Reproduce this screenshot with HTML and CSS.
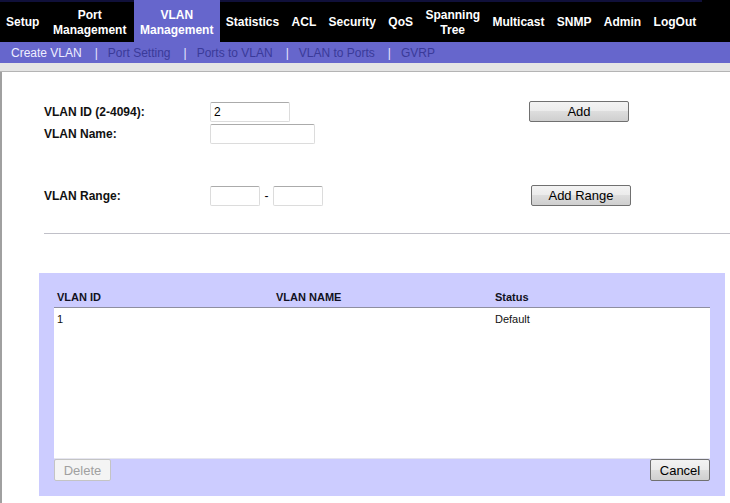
FILE: index.html
```html
<!DOCTYPE html>
<html>
<head>
<meta charset="utf-8">
<link rel="stylesheet" href="styles.css">
</head>
<body>
<nav class="topnav">
  <a class="tab">Setup</a>
  <a class="tab">Port<br>Management</a>
  <a class="tab active">VLAN<br>Management</a>
  <a class="tab">Statistics</a>
  <a class="tab">ACL</a>
  <a class="tab">Security</a>
  <a class="tab">QoS</a>
  <a class="tab">Spanning<br>Tree</a>
  <a class="tab">Multicast</a>
  <a class="tab">SNMP</a>
  <a class="tab">Admin</a>
  <a class="tab">LogOut</a>
</nav>
<div class="subnav">
  <a class="sub current">Create VLAN</a><span class="sep">|</span>
  <a class="sub">Port Setting</a><span class="sep">|</span>
  <a class="sub">Ports to VLAN</a><span class="sep">|</span>
  <a class="sub">VLAN to Ports</a><span class="sep">|</span>
  <a class="sub">GVRP</a>
</div>
<div class="strip"></div>
<main class="main">
  <form class="vform">
    <div class="row r1">
      <label class="lbl">VLAN ID (2-4094):</label>
      <div class="field"><input class="inp w80" type="text" value="2"></div>
      <button type="button" class="btn btn-add">Add</button>
    </div>
    <div class="row r2">
      <label class="lbl">VLAN Name:</label>
      <div class="field"><input class="inp w105" type="text"></div>
    </div>
    <div class="row r3">
      <label class="lbl">VLAN Range:</label>
      <div class="field"><input class="inp w50" type="text"><span class="dash">-</span><input class="inp w50" type="text"></div>
      <button type="button" class="btn btn-range">Add Range</button>
    </div>
  </form>
  <hr class="rule">
  <section class="panel">
    <div class="thead">
      <span>VLAN ID</span><span>VLAN NAME</span><span>Status</span>
    </div>
    <div class="tbody">
      <div class="trow"><span>1</span><span></span><span>Default</span></div>
    </div>
    <div class="actions">
      <button type="button" class="btn btn-del" disabled>Delete</button>
      <button type="button" class="btn btn-cancel">Cancel</button>
    </div>
  </section>
</main>
</body>
</html>
```
FILE: styles.css
```css
html, body {
  margin: 0;
  padding: 0;
  background: #ffffff;
  font-family: "Liberation Sans", Arial, sans-serif;
  width: 730px;
  overflow: hidden;
}
.topnav {
  display: flex;
  background: #000000;
  height: 42px;
}
.tab {
  display: flex;
  align-items: center;
  justify-content: center;
  text-align: center;
  padding: 0 6.2px;
  color: #ffffff;
  font-weight: bold;
  font-size: 12px;
  line-height: 15px;
  border-top: 2px solid #10103a;
  box-sizing: border-box;
  height: 42px;
  padding-top: 1px;
}
.tab:first-child { padding-left: 6px; }
.tab:nth-child(2) { padding-left: 7.5px; padding-right: 7.5px; }
.tab.active {
  background: #6666cc;
  border-top-color: #6666cc;
}
.subnav {
  display: flex;
  align-items: center;
  background: #6666cc;
  height: 21px;
  padding-left: 11px;
  font-size: 12px;
}
.sub { color: #3a3a99; }
.sub.current { color: #eeeeff; }
.sep {
  color: #e6e6ff;
  margin: 0 10px 0 13px;
}
.strip {
  height: 8px;
  background: #e4e4e4;
  border-bottom: 1px solid #b4b4b4;
}
.main {
  border-left: 2px solid #a0a0a0;
  padding: 29px 0 20px 42px;
}
.vform { margin: 0; }
.row {
  display: grid;
  grid-template-columns: 166px 319px auto;
  align-items: center;
}
.r1 { height: 21px; }
.r2 { height: 20px; margin-top: 2px; }
.r3 { height: 21px; margin-top: 41px; }
.lbl {
  font-weight: bold;
  font-size: 12px;
  color: #111111;
}
.field {
  display: flex;
  align-items: center;
}
.inp {
  box-sizing: border-box;
  height: 20px;
  border: 1px solid #dcdcdc;
  border-top-color: #ababab;
  border-radius: 2px;
  font-family: "Liberation Sans", Arial, sans-serif;
  font-size: 12px;
  padding: 0 3px;
  margin: 0;
  background: #ffffff;
  color: #000;
}
.w80 { width: 80px; }
.w105 { width: 105px; }
.w50 { width: 50px; }
.dash {
  font-size: 12px;
  width: 13px;
  text-align: center;
}
.btn {
  box-sizing: border-box;
  height: 21px;
  font-family: "Liberation Sans", Arial, sans-serif;
  font-size: 13px;
  color: #000;
  border: 1px solid #707070;
  border-radius: 2px;
  background: linear-gradient(#f3f3f3 0%, #ebebeb 50%, #dddddd 50%, #cfcfcf 100%);
  padding: 0;
  margin: 0;
}
.btn-add { width: 100px; }
.btn-range { width: 100px; margin-left: 2px; }
.rule {
  border: 0;
  border-top: 1px solid #c0c0c8;
  margin: 27px 0 0 0;
  height: 0;
}
.panel {
  background: #ccccff;
  margin: 39px 5px 0 -5px;
  padding: 0 15px 15px 15px;
  box-sizing: border-box;
}
.thead, .trow {
  display: grid;
  grid-template-columns: 219px 219px 1fr;
  padding-left: 3px;
  font-size: 11px;
}
.thead {
  height: 35px;
  align-items: end;
  padding-bottom: 4px;
  box-sizing: border-box;
  font-weight: bold;
  color: #111122;
  border-bottom: 1px solid #8e8ea0;
}
.tbody {
  background: #ffffff;
  height: 151px;
  border-bottom: 1px solid #e6e6f0;
  box-sizing: border-box;
}
.trow {
  padding-top: 5px;
  color: #111111;
}
.actions {
  display: flex;
  justify-content: space-between;
}
.btn-del {
  width: 57px;
  height: 22px;
  color: #a0a0a0;
  background: #f4f4f4;
  border-color: #c4c4c4;
}
.btn-cancel {
  width: 60px;
  height: 22px;
}
```
